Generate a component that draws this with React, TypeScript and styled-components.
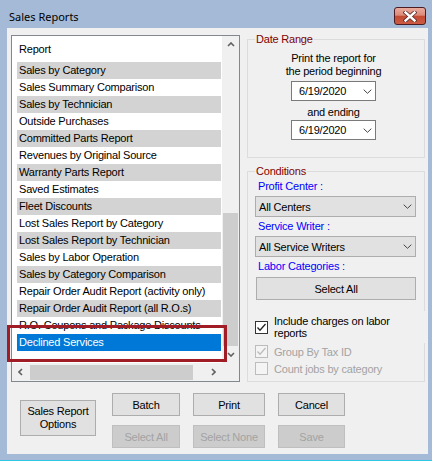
import React from "react";
import styled, { createGlobalStyle } from "styled-components";

const GlobalStyle = createGlobalStyle`
  html, body { margin: 0; padding: 0; background: #a4bad6; }
  body {
    font-family: "Liberation Sans", Arial, sans-serif;
    font-size: 11px;
    letter-spacing: -0.2px;
    color: #000;
  }
  * { box-sizing: border-box; }
`;

const Window = styled.div`
  width: 432px;
  height: 461px;
  background: #a4bad6;
  border-bottom: 1px solid #2ec8e6;
  display: flex;
  flex-direction: column;
  overflow: hidden;
`;

const TitleBar = styled.div`
  height: 28px;
  flex: none;
  display: flex;
  align-items: flex-start;
  justify-content: space-between;
  padding: 0 6px 0 9px;
`;

const Title = styled.div`
  font-family: "Noto Sans", sans-serif;
  font-size: 11px;
  letter-spacing: 0;
  line-height: 14px;
  margin-top: 10px;
`;

const CloseButton = styled.div`
  margin-top: 7px;
  width: 32px;
  height: 18px;
  border: 1px solid #4b1d22;
  border-radius: 3px;
  background: linear-gradient(
    to bottom,
    #e9ab9d 0%,
    #dc8a79 45%,
    #c34a33 52%,
    #cc5b43 100%
  );
  display: flex;
  align-items: center;
  justify-content: center;
`;

const Client = styled.div`
  margin-left: 7px;
  width: 421px;
  height: 426px;
  background: #f0f0f0;
  display: flex;
  flex-direction: column;
`;

const TopRow = styled.div`
  display: flex;
  align-items: flex-start;
  padding: 7px 0 0 4px;
`;

const ListBox = styled.div`
  position: relative;
  width: 229px;
  height: 347px;
  border: 1px solid #828790;
  background: #fff;
  display: grid;
  grid-template-columns: 210px 17px;
  grid-template-rows: 327px 18px;
`;

const ListContent = styled.div`
  overflow: hidden;
  display: flex;
  flex-direction: column;
`;

const HeaderRow = styled.div`
  height: 26px;
  padding: 5px 0 4px 7px;
  line-height: 17px;
  white-space: nowrap;
`;

const Row = styled.div<{ $tone: "gray" | "white" | "selected" }>`
  flex: none;
  height: 17px;
  line-height: 17px;
  margin: 0 1px 0 5px;
  padding-left: 2px;
  white-space: nowrap;
  overflow: hidden;
  background: ${(p) =>
    p.$tone === "gray" ? "#d3d3d3" : p.$tone === "selected" ? "#0078d7" : "#fff"};
  color: ${(p) => (p.$tone === "selected" ? "#fff" : "#000")};
`;

const VScroll = styled.div`
  background: #f0f0f0;
  display: flex;
  flex-direction: column;
`;

const ScrollButton = styled.div`
  flex: none;
  width: 17px;
  height: 17px;
  display: flex;
  align-items: center;
  justify-content: center;
`;

const VTrack = styled.div`
  flex: 1;
  display: flex;
  flex-direction: column;
  justify-content: flex-end;
`;

const VThumb = styled.div`
  height: 133px;
  margin: 0 1px;
  background: #cdcdcd;
`;

const HScroll = styled.div`
  background: #f0f0f0;
  display: flex;
  align-items: center;
`;

const HTrack = styled.div`
  flex: 1;
  height: 100%;
  display: flex;
  align-items: center;
`;

const HThumb = styled.div`
  width: 163px;
  height: 15px;
  margin-left: 1px;
  background: #cdcdcd;
`;

const Corner = styled.div`
  background: #f0f0f0;
`;

const Annotation = styled.div`
  position: absolute;
  left: -5px;
  top: 289px;
  width: 220px;
  height: 37px;
  border: 3px solid #a01d26;
  pointer-events: none;
`;

const RightColumn = styled.div`
  margin-left: 7px;
  width: 178px;
  padding-top: 4px;
  display: flex;
  flex-direction: column;
`;

const GroupBox = styled.div<{ $height: number; $mb?: number }>`
  position: relative;
  height: ${(p) => p.$height}px;
  margin-bottom: ${(p) => p.$mb ?? 0}px;
  border: 1px solid #dcdcdc;
`;

const Legend = styled.span`
  position: absolute;
  top: -7px;
  left: 7px;
  padding: 0 1px;
  line-height: 13px;
  background: #f0f0f0;
  color: #800000;
`;

const DateBody = styled.div`
  padding: 12px 5px 0 0;
  display: flex;
  flex-direction: column;
  align-items: center;
`;

const CenterText = styled.div<{ $mt?: number }>`
  margin-top: ${(p) => p.$mt ?? 0}px;
  text-align: center;
  line-height: 13px;
`;

const DatePicker = styled.div<{ $mt: number }>`
  margin-top: ${(p) => p.$mt}px;
  width: 85px;
  height: 20px;
  border: 1px solid #7a7a7a;
  background: #fff;
  display: flex;
  align-items: center;
  justify-content: space-between;
  padding: 0 3px 0 7px;
`;

const CondBody = styled.div`
  padding: 8px 0 0 7px;
  display: flex;
  flex-direction: column;
  align-items: flex-start;
`;

const FieldLabel = styled.div<{ $mt?: number }>`
  margin: ${(p) => p.$mt ?? 0}px 0 0 3px;
  color: #0000ff;
  line-height: 13px;
`;

const Combo = styled.div`
  margin-top: 3px;
  width: 161px;
  height: 21px;
  background: #e1e1e1;
  border: 1px solid #adadad;
  display: flex;
  align-items: center;
  justify-content: space-between;
  padding: 0 3px;
`;

const WideButton = styled.div`
  margin: 4px 0 0 1px;
  width: 160px;
  height: 23px;
  background: #e1e1e1;
  border: 1px solid #adadad;
  display: flex;
  align-items: center;
  justify-content: center;
`;

const CheckRow = styled.div<{ $height: number; $mt?: number; $cover?: boolean; $disabled?: boolean }>`
  align-self: stretch;
  height: ${(p) => p.$height}px;
  margin-top: ${(p) => p.$mt ?? 0}px;
  margin-right: ${(p) => (p.$cover ? -3 : 0)}px;
  background: ${(p) => (p.$cover ? "#f0f0f0" : "transparent")};
  display: flex;
  align-items: center;
  gap: 6px;
  color: ${(p) => (p.$disabled ? "#a3a3a3" : "#000")};
`;

const Box = styled.div<{ $disabled?: boolean }>`
  flex: none;
  width: 13px;
  height: 13px;
  border: 1px solid ${(p) => (p.$disabled ? "#bcbcbc" : "#333")};
  background: ${(p) => (p.$disabled ? "#f4f4f4" : "#fff")};
  display: flex;
  align-items: center;
  justify-content: center;
`;

const CheckText = styled.div`
  line-height: 12px;
`;

const BottomBar = styled.div`
  display: flex;
  align-items: flex-start;
  padding: 11px 0 0 13px;
`;

const OptionsButton = styled.div`
  margin-top: 7px;
  width: 76px;
  height: 36px;
  background: #e1e1e1;
  border: 1px solid #adadad;
  display: flex;
  align-items: center;
  justify-content: center;
  text-align: center;
  line-height: 13px;
`;

const ButtonGrid = styled.div`
  margin-left: 16px;
  display: grid;
  grid-template-columns: 68px 72px 67px;
  column-gap: 13px;
  row-gap: 9px;
`;

const ActionButton = styled.div<{ $disabled?: boolean }>`
  height: 23px;
  background: ${(p) => (p.$disabled ? "#cccccc" : "#e1e1e1")};
  border: 1px solid ${(p) => (p.$disabled ? "#bfbfbf" : "#adadad")};
  color: ${(p) => (p.$disabled ? "#a3a3a3" : "#000")};
  display: flex;
  align-items: center;
  justify-content: center;
`;

type Dir = "up" | "down" | "left" | "right";

const Chevron: React.FC<{ dir: Dir; w: number; h: number; sw: number; color: string }> = ({
  dir,
  w,
  h,
  sw,
  color,
}) => {
  const m = sw / 2 + 0.2;
  let pts = "";
  if (dir === "up") pts = `${m},${h - m} ${w / 2},${m} ${w - m},${h - m}`;
  if (dir === "down") pts = `${m},${m} ${w / 2},${h - m} ${w - m},${m}`;
  if (dir === "left") pts = `${w - m},${m} ${m},${h / 2} ${w - m},${h - m}`;
  if (dir === "right") pts = `${m},${m} ${w - m},${h / 2} ${m},${h - m}`;
  return (
    <svg width={w} height={h} viewBox={`0 0 ${w} ${h}`}>
      <polyline points={pts} fill="none" stroke={color} strokeWidth={sw} strokeLinejoin="miter" />
    </svg>
  );
};

const Check: React.FC<{ color: string }> = ({ color }) => (
  <svg width="11" height="11" viewBox="0 0 11 11">
    <polyline points="1.5,5.5 4,8.2 9.5,2" fill="none" stroke={color} strokeWidth="1.3" />
  </svg>
);

const CloseGlyph = () => (
  <svg width="14" height="11" viewBox="0 0 14 11">
    <path d="M2.5 1.5 L11.5 9.5 M11.5 1.5 L2.5 9.5" stroke="#5a2a2a" strokeWidth="4" strokeLinecap="square" />
    <path d="M2.5 1.5 L11.5 9.5 M11.5 1.5 L2.5 9.5" stroke="#ffffff" strokeWidth="2.4" strokeLinecap="square" />
  </svg>
);

const reports = [
  "Sales by Category",
  "Sales Summary Comparison",
  "Sales by Technician",
  "Outside Purchases",
  "Committed Parts Report",
  "Revenues by Original Source",
  "Warranty Parts Report",
  "Saved Estimates",
  "Fleet Discounts",
  "Lost Sales Report by Category",
  "Lost Sales Report by Technician",
  "Sales by Labor Operation",
  "Sales by Category Comparison",
  "Repair Order Audit Report (activity only)",
  "Repair Order Audit Report (all R.O.s)",
  "R.O. Coupons and Package Discounts",
  "Declined Services",
];

export default function App() {
  const arrow = "#606060";
  return (
    <>
      <GlobalStyle />
      <Window>
        <TitleBar>
          <Title>Sales Reports</Title>
          <CloseButton>
            <CloseGlyph />
          </CloseButton>
        </TitleBar>
        <Client>
          <TopRow>
            <ListBox>
              <ListContent>
                <HeaderRow>Report</HeaderRow>
                {reports.map((r, i) => (
                  <Row
                    key={r}
                    $tone={i === reports.length - 1 ? "selected" : i % 2 === 0 ? "gray" : "white"}
                  >
                    {r}
                  </Row>
                ))}
              </ListContent>
              <VScroll>
                <ScrollButton>
                  <Chevron dir="up" w={8} h={5} sw={1.6} color={arrow} />
                </ScrollButton>
                <VTrack>
                  <VThumb />
                </VTrack>
                <ScrollButton>
                  <Chevron dir="down" w={8} h={5} sw={1.6} color={arrow} />
                </ScrollButton>
              </VScroll>
              <HScroll>
                <ScrollButton>
                  <Chevron dir="left" w={5} h={8} sw={1.6} color={arrow} />
                </ScrollButton>
                <HTrack>
                  <HThumb />
                </HTrack>
                <ScrollButton>
                  <Chevron dir="right" w={5} h={8} sw={1.6} color={arrow} />
                </ScrollButton>
              </HScroll>
              <Corner />
              <Annotation />
            </ListBox>
            <RightColumn>
              <GroupBox $height={119} $mb={13}>
                <Legend>Date Range</Legend>
                <DateBody>
                  <CenterText>
                    Print the report for
                    <br />
                    the period beginning
                  </CenterText>
                  <DatePicker $mt={3}>
                    <span>6/19/2020</span>
                    <Chevron dir="down" w={9} h={5} sw={1} color="#444" />
                  </DatePicker>
                  <CenterText $mt={5}>and ending</CenterText>
                  <DatePicker $mt={1}>
                    <span>6/19/2020</span>
                    <Chevron dir="down" w={9} h={5} sw={1} color="#444" />
                  </DatePicker>
                </DateBody>
              </GroupBox>
              <GroupBox $height={211}>
                <Legend>Conditions</Legend>
                <CondBody>
                  <FieldLabel>Profit Center :</FieldLabel>
                  <Combo>
                    <span>All Centers</span>
                    <Chevron dir="down" w={9} h={5} sw={1} color="#444" />
                  </Combo>
                  <FieldLabel $mt={3}>Service Writer :</FieldLabel>
                  <Combo>
                    <span>All Service Writers</span>
                    <Chevron dir="down" w={9} h={5} sw={1} color="#444" />
                  </Combo>
                  <FieldLabel $mt={3}>Labor Categories :</FieldLabel>
                  <WideButton>Select All</WideButton>
                  <CheckRow $height={32} $mt={11} $cover>
                    <Box>
                      <Check color="#222" />
                    </Box>
                    <CheckText>
                      Include charges on labor
                      <br />
                      reports
                    </CheckText>
                  </CheckRow>
                  <CheckRow $height={17} $disabled>
                    <Box $disabled>
                      <Check color="#bcbcbc" />
                    </Box>
                    <CheckText>Group By Tax ID</CheckText>
                  </CheckRow>
                  <CheckRow $height={17} $disabled>
                    <Box $disabled />
                    <CheckText>Count jobs by category</CheckText>
                  </CheckRow>
                </CondBody>
              </GroupBox>
            </RightColumn>
          </TopRow>
          <BottomBar>
            <OptionsButton>
              Sales Report
              <br />
              Options
            </OptionsButton>
            <ButtonGrid>
              <ActionButton>Batch</ActionButton>
              <ActionButton>Print</ActionButton>
              <ActionButton>Cancel</ActionButton>
              <ActionButton $disabled>Select All</ActionButton>
              <ActionButton $disabled>Select None</ActionButton>
              <ActionButton $disabled>Save</ActionButton>
            </ButtonGrid>
          </BottomBar>
        </Client>
      </Window>
    </>
  );
}
